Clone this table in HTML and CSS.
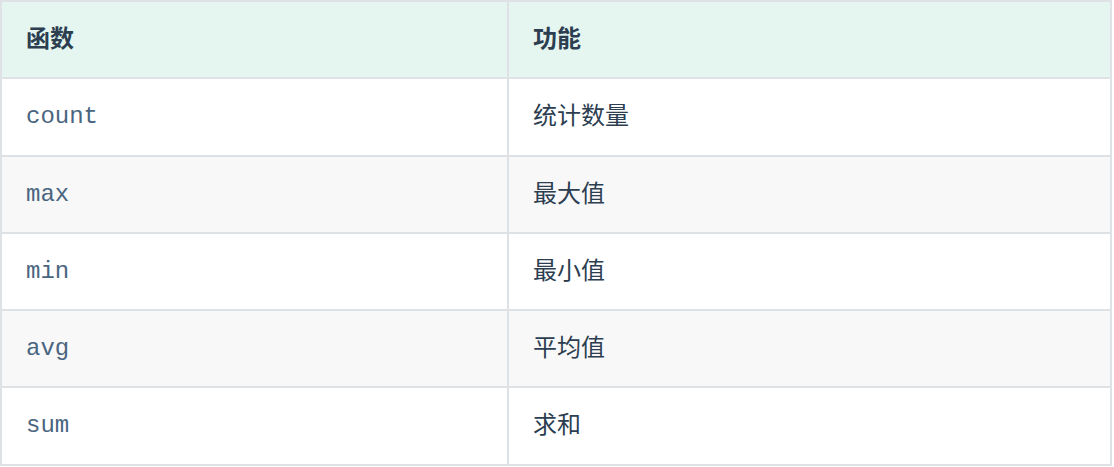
FILE: index.html
```html
<!DOCTYPE html>
<html lang="zh">
<head>
<meta charset="utf-8">
<link rel="stylesheet" href="styles.css">
</head>
<body>
<table class="fn-table">
  <thead>
    <tr><th class="col-fn">函数</th><th>功能</th></tr>
  </thead>
  <tbody>
    <tr><td class="code">count</td><td>统计数量</td></tr>
    <tr><td class="code">max</td><td>最大值</td></tr>
    <tr><td class="code">min</td><td>最小值</td></tr>
    <tr><td class="code">avg</td><td>平均值</td></tr>
    <tr><td class="code">sum</td><td>求和</td></tr>
  </tbody>
</table>
</body>
</html>
```
FILE: styles.css
```css
html, body {
  margin: 0;
  padding: 0;
  background: #ffffff;
}
body {
  font-family: "Noto Sans CJK SC", "Noto Sans", sans-serif;
  color: #2c3e50;
}
.fn-table {
  border-collapse: collapse;
  width: 1112px;
  table-layout: fixed;
}
.fn-table th,
.fn-table td {
  border: 2px solid #dfe2e5;
  padding: 15px 24px 21px;
  height: 39.3px;
  line-height: 39.3px;
  font-size: 24px;
  text-align: left;
  vertical-align: middle;
}
.fn-table th {
  background: #e5f6f0;
  font-weight: 700;
}
.col-fn {
  width: 457px;
}
.fn-table tbody tr:nth-child(even) {
  background: #f8f8f8;
}
.fn-table td.code {
  padding-top: 18px;
  padding-bottom: 18px;
  font-family: "Liberation Mono", "DejaVu Sans Mono", monospace;
  color: #4a6580;
}
```
